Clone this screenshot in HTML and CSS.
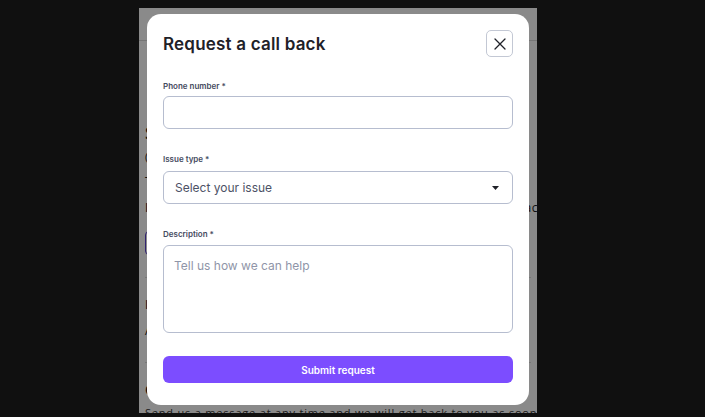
FILE: index.html
```html
<!DOCTYPE html>
<html lang="en">
<head>
<meta charset="utf-8">
<title>Request a call back</title>
<link rel="stylesheet" href="styles.css">
</head>
<body>
<div class="page">
  <header class="page-header"></header>
  <main class="page-body">
    <h2 class="bg-heading">Still need help with something?</h2>
    <p class="bg-small">(Our team is available Monday to Friday)</p>
    <p class="bg-text">Talk to one of our support specialists today</p>
    <p class="bg-text">If you can't find the answer you need, our team can call you back soon</p>
    <button class="bg-btn" type="button">Request a call</button>
    <hr class="bg-rule">
    <p class="bg-text">In the meantime, you can browse our help articles</p>
    <p class="bg-text">All of our guides are kept up to date for every</p>
    <hr class="bg-rule">
    <h3 class="bg-heading-sm">Other ways to get in touch</h3>
    <p class="bg-last">Send us a message at any time and we will get back to you as soon as possible</p>
  </main>
  <div class="overlay">
    <div class="modal" role="dialog" aria-labelledby="modal-title">
      <div class="modal-header">
        <h1 id="modal-title" class="modal-title">Request a call back</h1>
        <button class="close-btn" type="button" aria-label="Close">
          <svg width="14" height="14" viewBox="0 0 14 14" aria-hidden="true"><path d="M2 2 L12 12 M12 2 L2 12" stroke="#1f2128" stroke-width="1.3" stroke-linecap="round" fill="none"/></svg>
        </button>
      </div>
      <form class="form">
        <div class="field field-phone">
          <label class="label" for="phone">Phone number *</label>
          <input id="phone" class="input" type="tel">
        </div>
        <div class="field field-select">
          <label class="label" for="issue">Issue type *</label>
          <div class="select">
            <span class="select-text">Select your issue</span>
            <svg class="caret" width="7" height="4" viewBox="0 0 7 4" aria-hidden="true"><path d="M0 0 H7 L3.5 4 Z" fill="#1f2128"/></svg>
          </div>
        </div>
        <div class="field field-desc">
          <label class="label" for="desc">Description *</label>
          <textarea id="desc" class="textarea" placeholder="Tell us how we can help"></textarea>
        </div>
        <button class="submit" type="button">Submit request</button>
      </form>
    </div>
  </div>
</div>
</body>
</html>
```

FILE: styles.css
```css
* { box-sizing: border-box; }
html, body { margin: 0; padding: 0; }
body {
  background: #101010;
  width: 705px;
  height: 417px;
  overflow: hidden;
  font-family: Inter, "Noto Sans", sans-serif;
}
.page {
  position: relative;
  margin: 8px 0 0 139px;
  width: 398px;
  height: 405px;
  background: #ffffff;
  overflow: hidden;
}
.page-header {
  height: 33px;
  border-bottom: 1px solid #d9d9d9;
}
.page-body {
  padding: 80px 6px 0 6px;
  font-family: "Open Sans", sans-serif;
  color: #222;
  white-space: nowrap;
}
.bg-heading { margin: 0; font-size: 17px; font-weight: 600; line-height: 24px; }
.bg-small { margin: 4px 0 0; font-size: 11px; line-height: 16px; }
.bg-text { margin: 8px 0 0; font-size: 12px; line-height: 18px; letter-spacing: 0.6px; }
.bg-btn {
  margin-top: 14px;
  height: 24px;
  width: 120px;
  border: 1px solid #5b3fd0;
  border-radius: 4px;
  background: #fff;
  font-size: 11px;
}
.bg-rule { margin: 22px 0 18px; border: 0; border-top: 1px solid #ddd; }
.bg-heading-sm { margin: 16px 0 0; font-size: 14px; font-weight: 600; line-height: 18px; }
.bg-last { margin: 6px 0 0; font-size: 11px; line-height: 16px; letter-spacing: 0.8px; color: #333; }
.overlay {
  position: absolute;
  inset: 0;
  background: rgba(0, 0, 0, 0.46);
  display: flex;
  justify-content: center;
  padding-top: 6px;
}
.modal {
  width: 382px;
  height: 391px;
  background: #ffffff;
  border-radius: 14px;
  padding: 16px 16px 0 16px;
  display: flex;
  flex-direction: column;
}
.modal-header {
  display: flex;
  align-items: center;
  justify-content: space-between;
  height: 27px;
}
.modal-title {
  margin: 0;
  font-size: 17px;
  font-weight: 600;
  color: #1f2128;
  letter-spacing: 0.2px;
}
.close-btn {
  width: 27px;
  height: 27px;
  border: 1px solid #c3c8d4;
  border-radius: 5px;
  background: #fff;
  padding: 0;
  display: flex;
  align-items: center;
  justify-content: center;
}
.form {
  display: flex;
  flex-direction: column;
  margin-top: 23px;
}
.field {
  display: flex;
  flex-direction: column;
  gap: 5px;
  margin-bottom: 24px;
}
.field-phone { gap: 4px; }
.field-select { gap: 6px; }
.field-desc { gap: 5px; margin-bottom: 23px; }
.label {
  font-size: 8px;
  line-height: 12px;
  font-weight: 600;
  color: #454b60;
}
.input, .select, .textarea {
  border: 1px solid #b6bdcf;
  border-radius: 6px;
  background: #fff;
  width: 350px;
  font-family: inherit;
}
.input { height: 33px; }
.select {
  height: 33px;
  display: flex;
  align-items: center;
  justify-content: space-between;
  padding: 0 13px 0 11px;
}
.select-text {
  font-size: 12px;
  color: #4d5266;
}
.textarea {
  height: 88px;
  resize: none;
  padding: 12px 10px;
  font-size: 12px;
  outline: none;
}
.textarea::placeholder { color: #8f95a8; }
.submit {
  height: 27px;
  width: 350px;
  border: 0;
  border-radius: 6px;
  background: #7c4dff;
  color: #fff;
  font-family: inherit;
  font-size: 10px;
  font-weight: 600;
}
```
